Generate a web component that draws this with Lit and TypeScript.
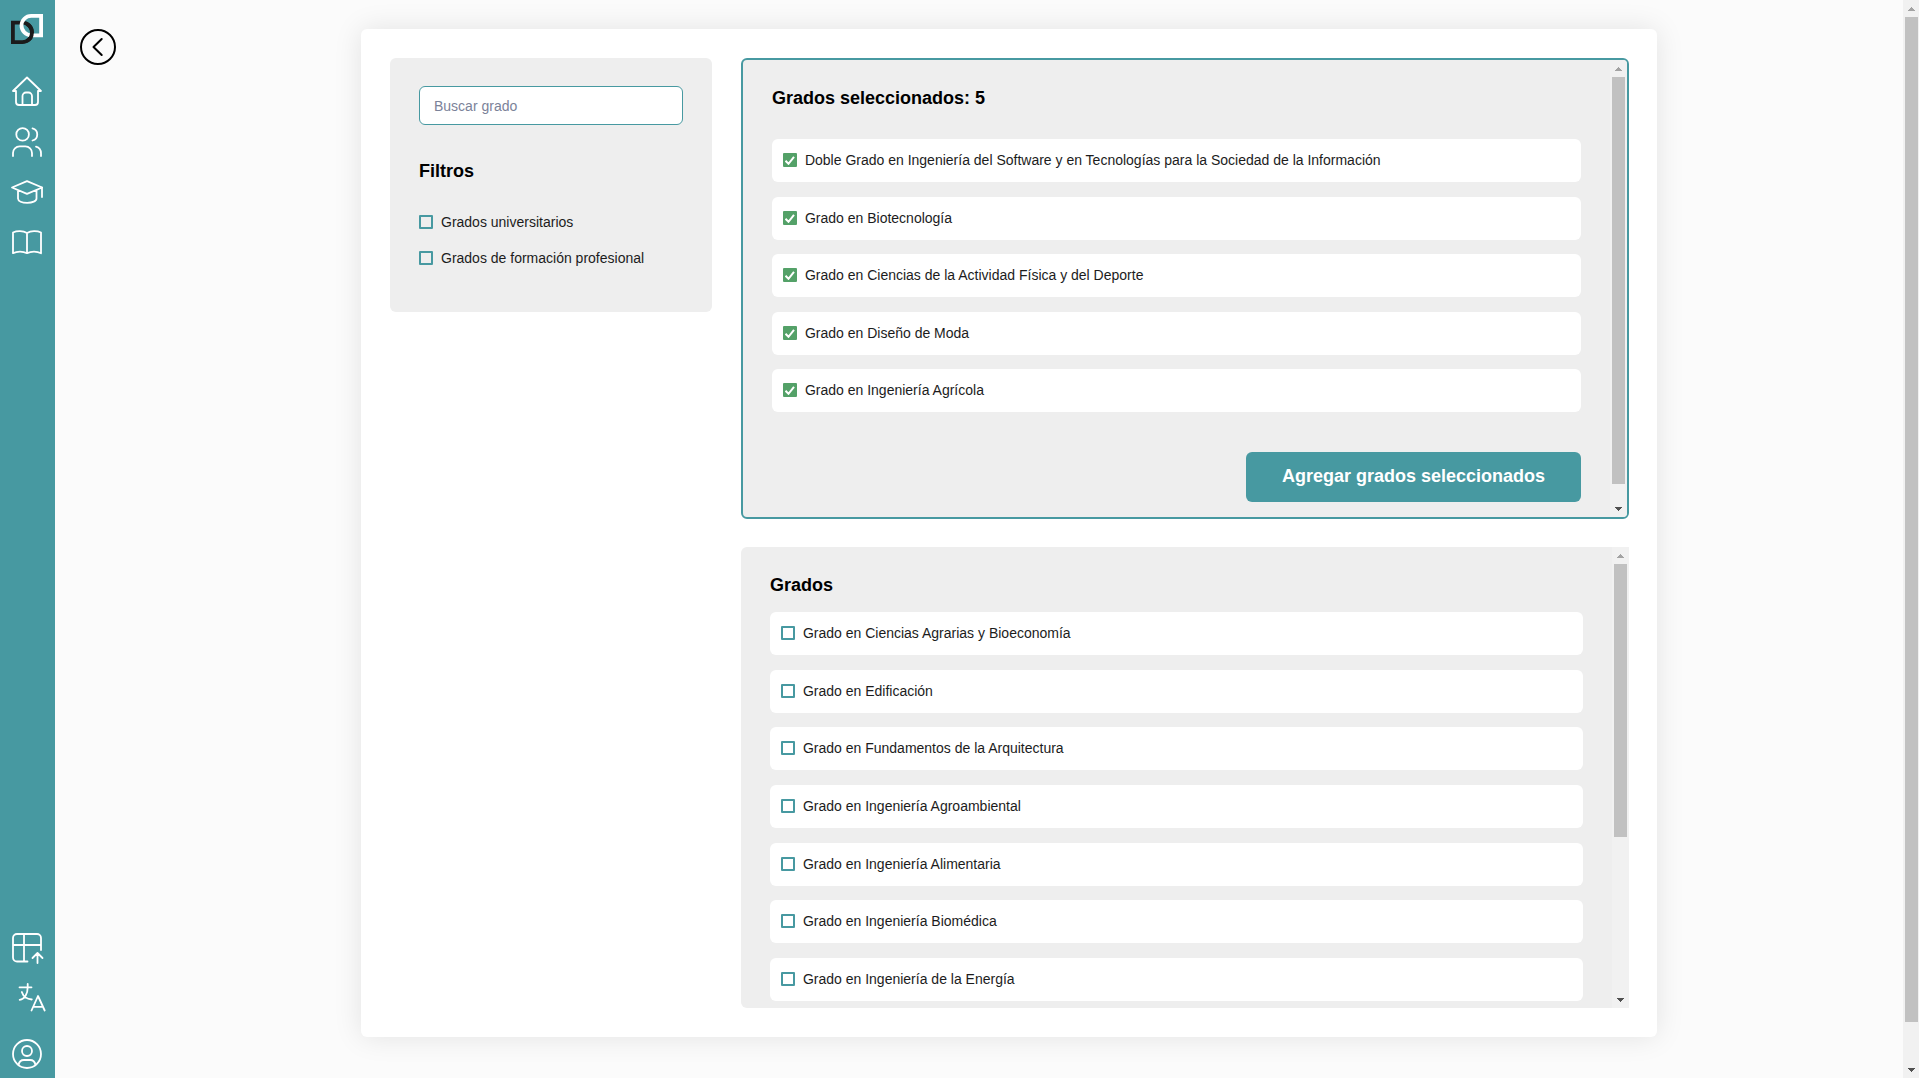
import { LitElement, html, svg, css } from "lit";
import { customElement, property, state } from "lit/decorators.js";
import { styleMap } from "lit/directives/style-map.js";

interface Grade {
  id: string;
  name: string;
}

const selectedGrades: Grade[] = [
  { id: "software-sociedad", name: "Doble Grado en Ingeniería del Software y en Tecnologías para la Sociedad de la Información" },
  { id: "biotecnologia", name: "Grado en Biotecnología" },
  { id: "actividad-fisica", name: "Grado en Ciencias de la Actividad Física y del Deporte" },
  { id: "diseno-moda", name: "Grado en Diseño de Moda" },
  { id: "agricola", name: "Grado en Ingeniería Agrícola" },
];

const availableGrades: Grade[] = [
  { id: "agrarias", name: "Grado en Ciencias Agrarias y Bioeconomía" },
  { id: "edificacion", name: "Grado en Edificación" },
  { id: "arquitectura", name: "Grado en Fundamentos de la Arquitectura" },
  { id: "agroambiental", name: "Grado en Ingeniería Agroambiental" },
  { id: "alimentaria", name: "Grado en Ingeniería Alimentaria" },
  { id: "biomedica", name: "Grado en Ingeniería Biomédica" },
  { id: "energia", name: "Grado en Ingeniería de la Energía" },
];

const filters: Grade[] = [
  { id: "universitarios", name: "Grados universitarios" },
  { id: "fp", name: "Grados de formación profesional" },
];

const icons = {
  home: svg`<path d="M5 15H2L16 1.500 30 15h-3M5 15v11a3 3 0 0 0 3 3h16a3 3 0 0 0 3-3V15M11.500 29V20a3.500 3.500 0 0 1 3.500-3.500h2.500a3.500 3.500 0 0 1 3.500 3.500v9"/>`,
  users: svg`<circle cx="11.600" cy="8.400" r="6.300"/><path d="M21.500 2.300a6.300 6.300 0 0 1 0 12.200M2 30v-3a6.600 6.600 0 0 1 6.600-6.600h5.800A6.600 6.600 0 0 1 21 27v3M25 20.600a7 7 0 0 1 5 6.700V30"/>`,
  cap: svg`<path d="M1 11.500 16 5.200l15.200 6.300L16 17.800zM31 11.500V21M7 14.200v8.300c0 2.600 4 4.300 9.200 4.300s9.300-1.700 9.300-4.300v-8.300"/>`,
  book: svg`<path d="M16 7C12 4.600 6 4.600 2 6.500v20.700c4-2.200 10-2.200 14 0 4-2.200 10-2.200 14 0V6.500C26 4.600 20 4.600 16 7zv20"/>`,
  table: svg`<path d="M16.500 29.500H6a4 4 0 0 1-4-4V6a4 4 0 0 1 4-4h20a4 4 0 0 1 4 4v12M2 13h28M13 2v27.500M26.500 31v-9.500M21.500 26l5-5 5 5"/>`,
  language: svg`<path d="M8.500 5.300h12M16.700 2v3.300c0 6.500-3 11.700-8 12.500M10.800 10c1.500 4.500 4.700 7 10 7.500M20.500 28.500 27 14l6.700 14.500M22.500 24.800h9"/>`,
  user: svg`<circle cx="16" cy="16" r="14"/><circle cx="16" cy="13" r="5"/><path d="M7.500 27c.5-3 2.500-5 5.500-5h6c3 0 5 2 5.500 5"/>`,
};

@customElement("scroll-rail")
class ScrollRail extends LitElement {
  @property({ type: Number }) visibleRatio = 1;

  static styles = css`
    :host {
      display: flex;
      flex: none;
      flex-direction: column;
      width: 17px;
      box-sizing: border-box;
      padding: 0 2px;
      background: #f1f1f1;
    }
    .arrow {
      display: flex;
      align-items: center;
      justify-content: center;
      height: 17px;
      color: #505050;
    }
    .arrow.idle {
      color: #a3a3a3;
    }
    .track {
      flex: 1;
    }
    .thumb {
      background: #c1c1c1;
    }
  `;

  render() {
    return html`
      <div class="arrow idle" aria-hidden="true">
        <svg width="7" height="4" shape-rendering="crispEdges"><path fill="currentColor" d="M3 0h1v1h1v1h1v1h1v1H0V3h1V2h1V1h1z" /></svg>
      </div>
      <div class="track">
        <div class="thumb" style=${styleMap({ height: `${this.visibleRatio * 100}%` })}></div>
      </div>
      <div class="arrow" aria-hidden="true">
        <svg width="7" height="4" shape-rendering="crispEdges"><path fill="currentColor" d="M0 0h7v1H6v1H5v1H4v1H3V3H2V2H1V1H0z" /></svg>
      </div>
    `;
  }
}

@customElement("check-row")
class CheckRow extends LitElement {
  @property() name = "";
  @property() label = "";
  @property({ type: Boolean }) checked = false;

  static styles = css`
    :host {
      display: block;
    }
    .row {
      display: flex;
      align-items: center;
      gap: 8px;
      font-size: 14px;
      line-height: 18px;
      color: #1c1c1c;
      cursor: pointer;
    }
    .box {
      appearance: none;
      flex: none;
      width: 14px;
      height: 14px;
      margin: 0;
      border: 2px solid #4799a1;
      border-radius: 1px;
      box-sizing: border-box;
    }
    .box:checked {
      border-color: #54a168;
      background: #54a168
        url("data:image/svg+xml,%3Csvg xmlns='http://www.w3.org/2000/svg' viewBox='0 0 14 14'%3E%3Cpath d='M2.500 7.800l3 3L11 3.800' fill='none' stroke='white' stroke-width='2'/%3E%3C/svg%3E")
        center / 14px 14px no-repeat;
    }
  `;

  render() {
    return html`
      <label class="row" for=${this.name}>
        <input class="box" type="checkbox" id=${this.name} name=${this.name} .checked=${this.checked} />
        <span>${this.label}</span>
      </label>
    `;
  }
}

@customElement("app-root")
class AppRoot extends LitElement {
  @state() private selected = selectedGrades;

  static styles = css`
    :host {
      display: flex;
      height: 100vh;
      overflow: hidden;
      background: #fbfbfb;
      color: #000;
      font-family: "Liberation Sans", Arial, sans-serif;
    }
    .sidebar {
      flex: none;
      display: flex;
      flex-direction: column;
      justify-content: space-between;
      box-sizing: border-box;
      width: 55px;
      padding: 13px 12px 8px 11px;
      background: #4799a1;
    }
    .group {
      display: flex;
      flex-direction: column;
      gap: 18px;
    }
    .logo {
      margin-bottom: 13px;
    }
    .account {
      margin-top: 6px;
    }
    .link {
      display: block;
      width: 32px;
      height: 32px;
      color: #fff;
    }
    .icon {
      display: block;
      overflow: visible;
      fill: none;
      stroke: currentColor;
      stroke-width: 1.8;
      stroke-linecap: round;
      stroke-linejoin: round;
    }
    .page {
      flex: 1;
      min-width: 0;
      display: flex;
      align-items: flex-start;
      padding: 29px 1px 0 25px;
    }
    .page-rail {
      width: 16px;
      padding-right: 1px;
    }
    .back {
      flex: none;
      width: 36px;
      height: 36px;
      padding: 0;
      border: 0;
      background: none;
      color: #000;
      cursor: pointer;
    }
    .back-icon {
      stroke-width: 2;
    }
    .card {
      flex: 1;
      display: grid;
      grid-template-columns: minmax(0, 29fr) minmax(0, 80fr);
      gap: 29px;
      box-sizing: border-box;
      max-width: 1296px;
      height: calc(100vh - 70px);
      margin: 0 auto;
      padding: 29px 28px 29px 29px;
      border-radius: 6px;
      background: #fff;
      box-shadow: 0 0 29px rgba(0, 0, 0, 0.1);
    }
    .filters {
      align-self: start;
      padding: 28px 29px 45px;
      border-radius: 6px;
      background: #eee;
    }
    .search {
      display: block;
      box-sizing: border-box;
      width: 100%;
      height: 39px;
      padding: 0 14px;
      border: 1px solid #4799a1;
      border-radius: 6px;
      background: #fff;
      font: 14px "Liberation Sans", Arial, sans-serif;
      color: #1c1c1c;
    }
    .search::placeholder {
      color: #7b8299;
    }
    .title {
      margin: 0;
      font-size: 18px;
      line-height: 22px;
      font-weight: 700;
    }
    .filters-title {
      margin: 35px 0 31px;
    }
    .options {
      display: flex;
      flex-direction: column;
      gap: 18px;
    }
    .lists {
      min-height: 0;
      display: grid;
      grid-template-rows: minmax(0, 1fr) minmax(0, 1fr);
      gap: 28px;
    }
    .panel {
      display: flex;
      overflow: hidden;
      background: #eee;
    }
    .chosen {
      border: 2px solid #4799a1;
      border-radius: 6px;
    }
    .available {
      border-radius: 6px 0 0 6px;
    }
    .content {
      flex: 1;
      min-width: 0;
      display: flex;
      flex-direction: column;
      overflow: auto;
      scrollbar-width: none;
      box-sizing: border-box;
      padding: 27px 29px 15px;
    }
    .available .content {
      padding-bottom: 7px;
    }
    .rows {
      flex: 1;
      display: flex;
      flex-direction: column;
      justify-content: space-between;
      margin: 0;
      padding: 0;
      list-style: none;
    }
    .chosen .rows {
      margin: 30px 0 40px;
    }
    .available .rows {
      margin-top: 16px;
    }
    .entry {
      flex: none;
      box-sizing: border-box;
      height: 43px;
      padding: 12px 11px;
      border-radius: 6px;
      background: #fff;
    }
    .actions {
      display: flex;
      justify-content: flex-end;
    }
    .submit {
      height: 50px;
      padding: 0 36px 2px;
      border: 0;
      border-radius: 6px;
      background: #4799a1;
      color: #fff;
      font: 700 18px "Liberation Sans", Arial, sans-serif;
      cursor: pointer;
    }
  `;

  private link(href: string, label: string, icon: unknown, extra = "") {
    return html`
      <a class="link ${extra}" href=${href} aria-label=${label}>
        <svg class="icon" width="32" height="32" viewBox="0 0 32 32">${icon}</svg>
      </a>
    `;
  }

  private rows(grades: Grade[], checked: boolean) {
    return html`
      <ul class="rows">
        ${grades.map(
          (g) => html`<li class="entry"><check-row .name=${g.id} .label=${g.name} .checked=${checked}></check-row></li>`
        )}
      </ul>
    `;
  }

  render() {
    return html`
      <nav class="sidebar">
        <div class="group">
          <a class="link logo" href="#inicio" aria-label="Inicio">
            <svg width="32" height="32" viewBox="0 0 32 32" fill="none" stroke-width="3.800">
              <path stroke="#1b1b1b" d="M1.900 9.700h9.400a9.700 9.700 0 0 1 0 19.400H1.900z" />
              <path stroke="#fff" d="M30.100 2.900h-9.900a9.700 9.700 0 0 0 0 19.400h9.900z" />
              <path stroke="#1b1b1b" d="M15.500 10.700a9.700 9.700 0 0 1 0 17.400" />
            </svg>
          </a>
          ${this.link("#panel", "Panel", icons.home)}
          ${this.link("#usuarios", "Usuarios", icons.users)}
          ${this.link("#grados", "Grados", icons.cap)}
          ${this.link("#asignaturas", "Asignaturas", icons.book)}
        </div>
        <div class="group">
          ${this.link("#importar", "Importar", icons.table)}
          ${this.link("#idioma", "Idioma", icons.language)}
          ${this.link("#cuenta", "Cuenta", icons.user, "account")}
        </div>
      </nav>
      <main class="page">
        <button class="back" type="button" aria-label="Volver">
          <svg class="icon back-icon" width="36" height="36" viewBox="0 0 36 36">
            <circle cx="18" cy="18" r="17" />
            <path d="M21.700 10 13.500 18l8.200 8" />
          </svg>
        </button>
        <div class="card">
          <aside class="filters">
            <input class="search" type="text" placeholder="Buscar grado" aria-label="Buscar grado" />
            <h2 class="title filters-title">Filtros</h2>
            <div class="options">
              ${filters.map((f) => html`<check-row .name=${f.id} .label=${f.name}></check-row>`)}
            </div>
          </aside>
          <div class="lists">
            <section class="panel chosen">
              <div class="content">
                <h2 class="title">Grados seleccionados: ${this.selected.length}</h2>
                ${this.rows(this.selected, true)}
                <div class="actions">
                  <button class="submit" type="button">Agregar grados seleccionados</button>
                </div>
              </div>
              <scroll-rail .visibleRatio=${0.962}></scroll-rail>
            </section>
            <section class="panel available">
              <div class="content">
                <h2 class="title">Grados</h2>
                ${this.rows(availableGrades, false)}
              </div>
              <scroll-rail .visibleRatio=${0.64}></scroll-rail>
            </section>
          </div>
        </div>
      </main>
      <scroll-rail class="page-rail" .visibleRatio=${0.963}></scroll-rail>
    `;
  }
}
